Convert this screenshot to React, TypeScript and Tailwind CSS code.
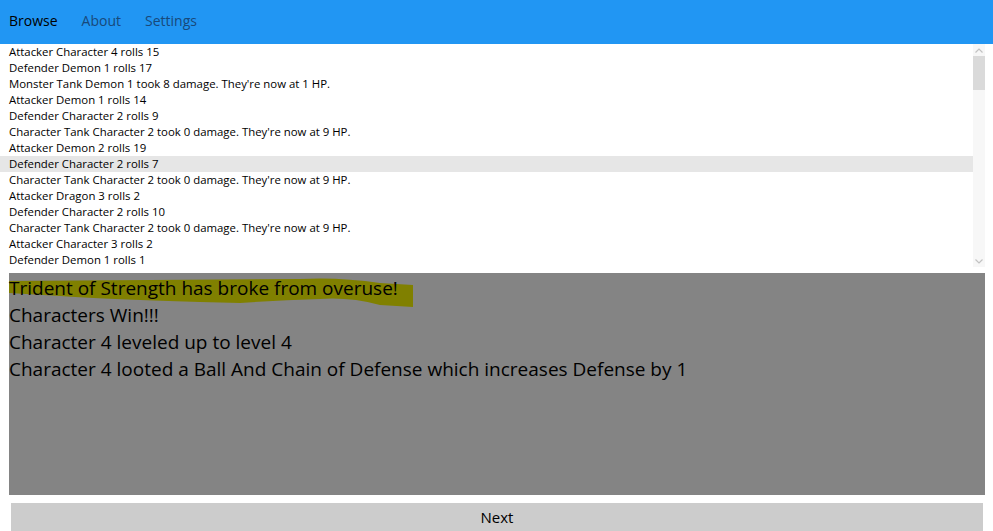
import React from "react";

const rows = [
  "Attacker Character 4 rolls 15",
  "Defender Demon 1 rolls 17",
  "Monster Tank Demon 1 took 8 damage. They're now at 1 HP.",
  "Attacker Demon 1 rolls 14",
  "Defender Character 2 rolls 9",
  "Character Tank Character 2 took 0 damage. They're now at 9 HP.",
  "Attacker Demon 2 rolls 19",
  "Defender Character 2 rolls 7",
  "Character Tank Character 2 took 0 damage. They're now at 9 HP.",
  "Attacker Dragon 3 rolls 2",
  "Defender Character 2 rolls 10",
  "Character Tank Character 2 took 0 damage. They're now at 9 HP.",
  "Attacker Character 3 rolls 2",
  "Defender Demon 1 rolls 1",
];

export default function App() {
  return (
    <div className="w-[993px] h-[531px] bg-white flex flex-col overflow-hidden font-['Open_Sans',sans-serif]">
      <div className="h-[44px] bg-[#2196f3] flex items-center pl-[9px] pb-[3px] gap-[24px] text-[14px] shrink-0">
        <span className="text-black">Browse</span>
        <span className="text-[#18497a]">About</span>
        <span className="text-[#18497a]">Settings</span>
      </div>
      <div className="flex h-[223px] shrink-0">
        <div className="flex-1 flex flex-col">
          {rows.map((r, i) => (
            <div
              key={i}
              className={`h-[16px] pl-[9px] text-[11.4px] leading-[16px] text-black whitespace-nowrap ${i === 7 ? "bg-[#e6e6e6]" : ""}`}
            >
              {r}
            </div>
          ))}
        </div>
        <div className="w-[12px] mr-[8px] bg-[#f7f7f7] flex flex-col">
          <div className="h-[12px] flex items-center justify-center">
            <svg width="8" height="5" viewBox="0 0 8 5"><path d="M0.5 4.5 L4 1 L7.5 4.5" stroke="#c2c2c2" strokeWidth="1.2" fill="none" /></svg>
          </div>
          <div className="h-[34px] bg-[#dadada]" />
          <div className="flex-1" />
          <div className="h-[12px] flex items-center justify-center">
            <svg width="8" height="5" viewBox="0 0 8 5"><path d="M0.5 0.5 L4 4 L7.5 0.5" stroke="#c2c2c2" strokeWidth="1.2" fill="none" /></svg>
          </div>
        </div>
      </div>
      <div className="mt-[6px] mx-[9px] mr-[8px] h-[222px] bg-[#848484] relative text-[19px] leading-[27px] text-black">
        <svg className="absolute left-0 top-0" width="420" height="40" viewBox="9 273 420 40">
          <path
            d="M9 281 L300 279 Q340 277 380 283 L413 285 L413 307 L380 305 Q350 297 320 299 Q280 300 240 303 L200 302 Q100 299 60 296 L9 293 Z"
            fill="#808000"
          />
        </svg>
        <div className="relative pt-[2px]">
          <div>Trident of Strength has broke from overuse!</div>
          <div>Characters Win!!!</div>
          <div>Character 4 leveled up to level 4</div>
          <div>Character 4 looted a Ball And Chain of Defense which increases Defense by 1</div>
        </div>
      </div>
      <button className="mt-[8px] mx-[11px] mr-[10px] h-[28px] bg-[#cccccc] text-[15px] text-black flex items-center justify-center">
        Next
      </button>
    </div>
  );
}
